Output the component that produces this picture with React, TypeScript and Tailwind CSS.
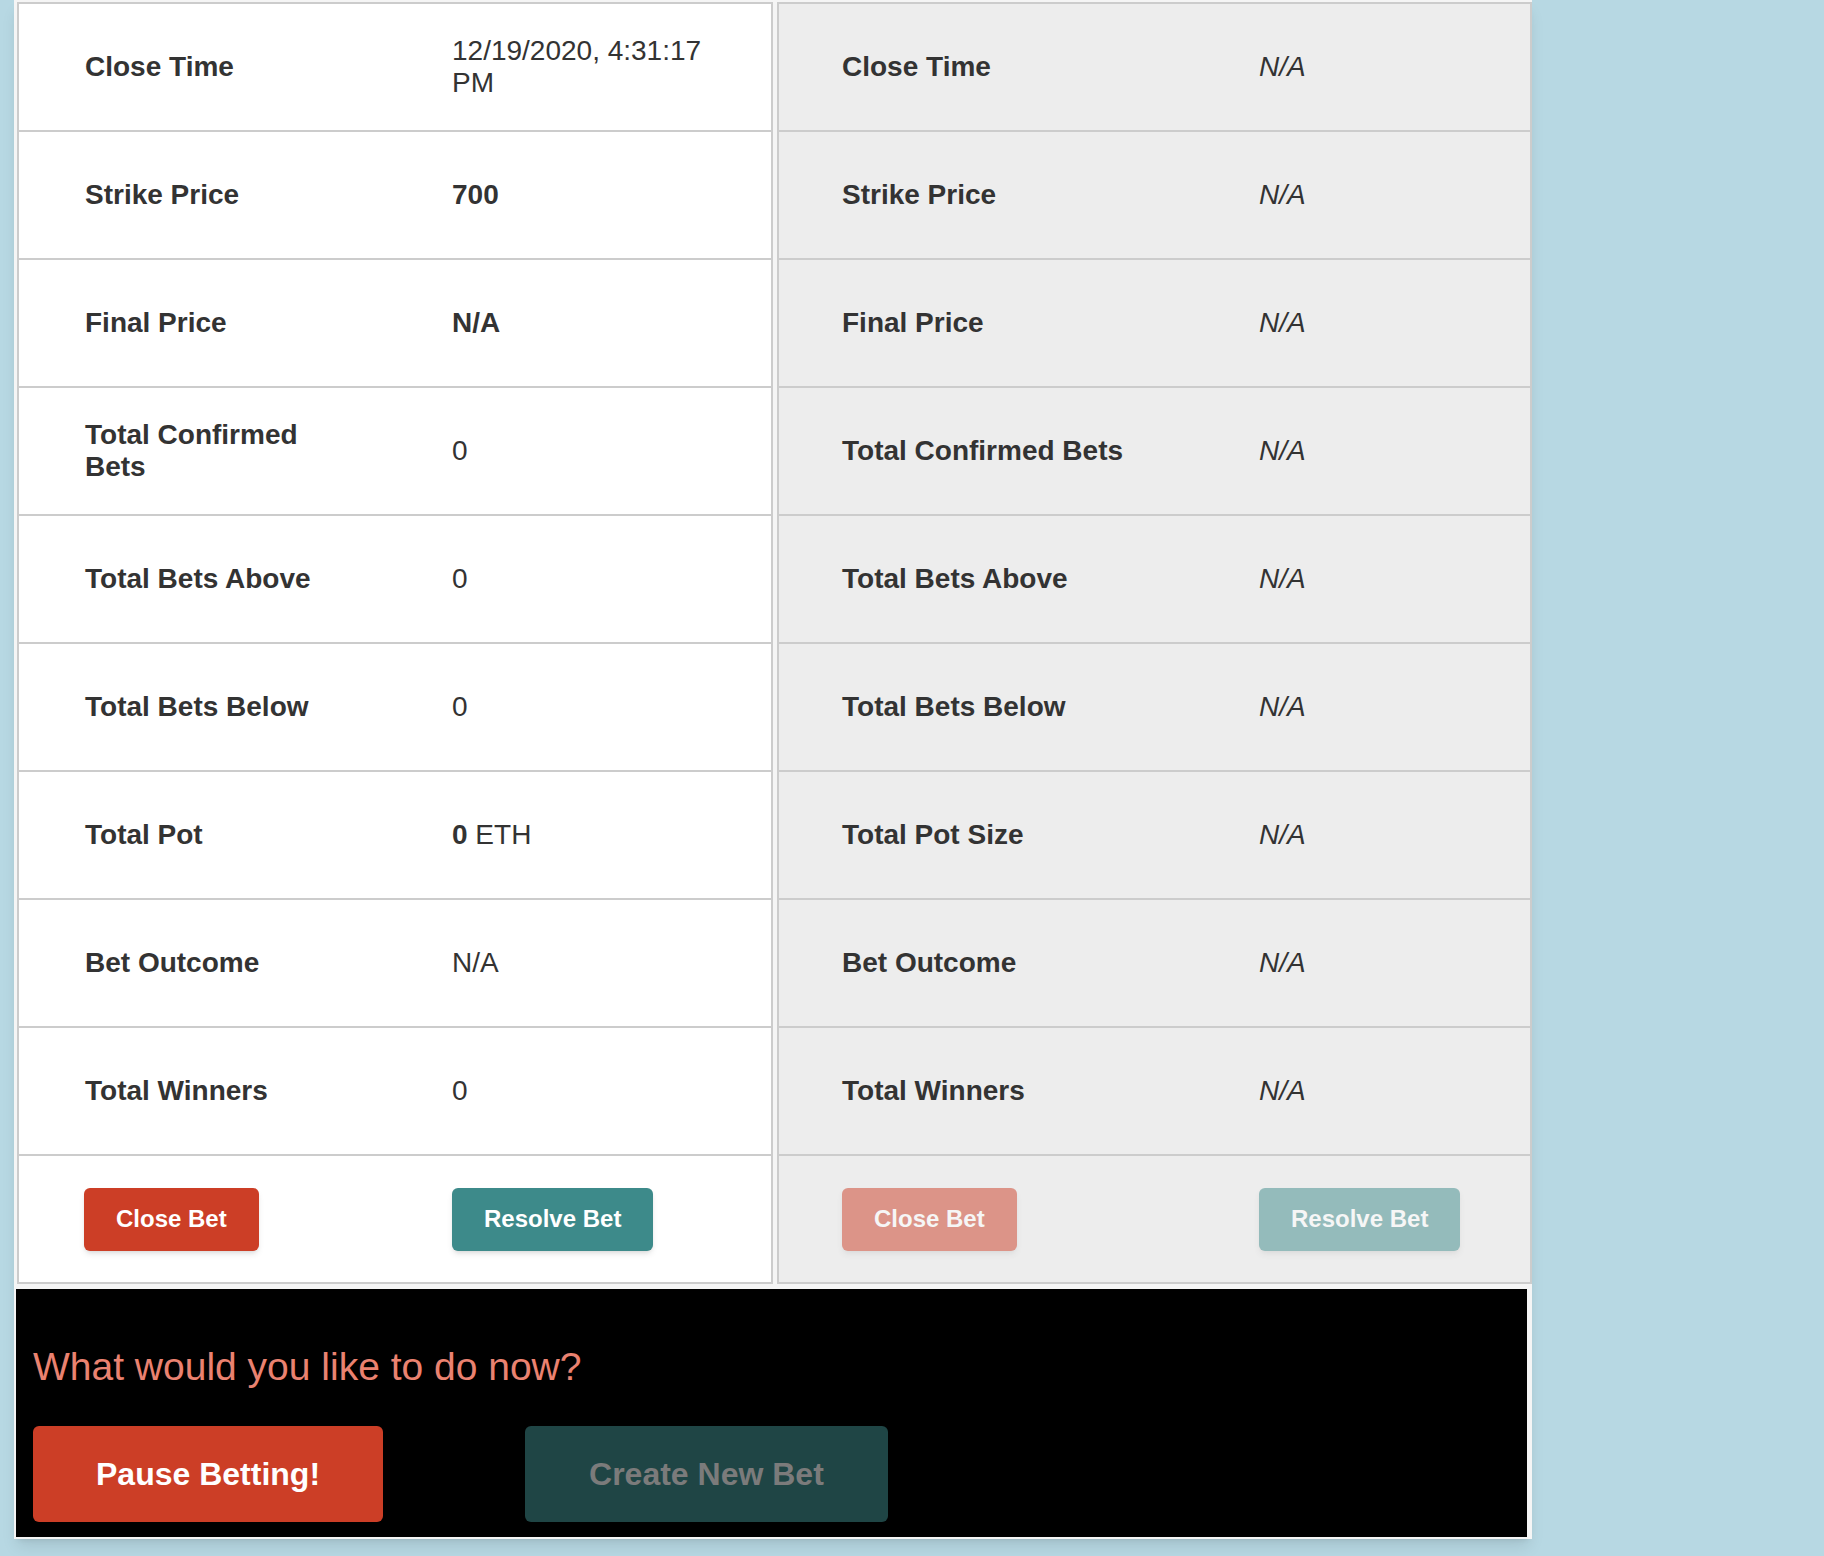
import React from "react";

type Row = { label: string; value: React.ReactNode };

const liveRows: Row[] = [
  { label: "Close Time", value: "12/19/2020, 4:31:17 PM" },
  { label: "Strike Price", value: <b>700</b> },
  { label: "Final Price", value: <b>N/A</b> },
  { label: "Total Confirmed Bets", value: "0" },
  { label: "Total Bets Above", value: "0" },
  { label: "Total Bets Below", value: "0" },
  {
    label: "Total Pot",
    value: (
      <>
        <b>0</b> ETH
      </>
    ),
  },
  { label: "Bet Outcome", value: "N/A" },
  { label: "Total Winners", value: "0" },
];

const nextLabels = [
  "Close Time",
  "Strike Price",
  "Final Price",
  "Total Confirmed Bets",
  "Total Bets Above",
  "Total Bets Below",
  "Total Pot Size",
  "Bet Outcome",
  "Total Winners",
];

function ActionButton({
  label,
  kind,
  faded,
}: {
  label: string;
  kind: "red" | "teal";
  faded?: boolean;
}) {
  return (
    <button
      className={`h-[63px] rounded-md px-[32px] text-[24px] font-bold text-white shadow-md ${
        kind === "red" ? "bg-[#cc3e26]" : "bg-[#3d8a8a]"
      } ${faded ? "opacity-50" : ""}`}
    >
      {label}
    </button>
  );
}

export default function App() {
  return (
    <div className="min-h-[1556px] bg-[#b7d8e3] font-['Liberation_Sans',Arial,sans-serif] text-[#333]">
      <div className="ml-[14px] w-[1518px] bg-[#f5f5f5] pt-[2px] pb-[2px] shadow-lg">
        <div className="flex gap-[4px] pl-[3px]">
          {/* current bet */}
          <div className="w-[756px] border-x-2 border-t-2 border-[#ccc] bg-white">
            {liveRows.map((r) => (
              <div
                key={r.label}
                className="grid h-[128px] grid-cols-[367px_385px] items-center border-b-2 border-[#ccc] text-[28px] leading-[32px]"
              >
                <div className="px-[66px] font-bold">{r.label}</div>
                <div className="px-[66px]">{r.value}</div>
              </div>
            ))}
            <div className="grid h-[128px] grid-cols-[367px_385px] items-center border-b-2 border-[#ccc]">
              <div className="pl-[65px]">
                <ActionButton label="Close Bet" kind="red" />
              </div>
              <div className="pl-[66px]">
                <ActionButton label="Resolve Bet" kind="teal" />
              </div>
            </div>
          </div>

          {/* next bet */}
          <div className="w-[755px] border-x-2 border-t-2 border-[#ccc] bg-[#ededed]">
            {nextLabels.map((l) => (
              <div
                key={l}
                className="grid h-[128px] grid-cols-[416px_335px] items-center border-b-2 border-[#ccc] text-[28px] leading-[32px]"
              >
                <div className="px-[63px] font-bold">{l}</div>
                <div className="px-[64px] italic">N/A</div>
              </div>
            ))}
            <div className="grid h-[128px] grid-cols-[416px_335px] items-center border-b-2 border-[#ccc]">
              <div className="pl-[63px]">
                <ActionButton label="Close Bet" kind="red" faded />
              </div>
              <div className="pl-[64px]">
                <ActionButton label="Resolve Bet" kind="teal" faded />
              </div>
            </div>
          </div>
        </div>

        <div className="mt-[5px] ml-[2px] w-[1511px] bg-black px-[17px] pt-[55px] pb-[15px]">
          <h2 className="text-[39px] leading-[45px] text-[#ea8270]">
            What would you like to do now?
          </h2>
          <div className="mt-[37px] flex gap-[142px]">
            <button className="h-[96px] rounded-md bg-[#cc3e26] px-[63px] text-[32px] font-bold text-white">
              Pause Betting!
            </button>
            <button className="h-[96px] rounded-md bg-[#1f4545] px-[64px] text-[32px] font-bold text-[#7b7b7b]">
              Create New Bet
            </button>
          </div>
        </div>
      </div>
    </div>
  );
}
